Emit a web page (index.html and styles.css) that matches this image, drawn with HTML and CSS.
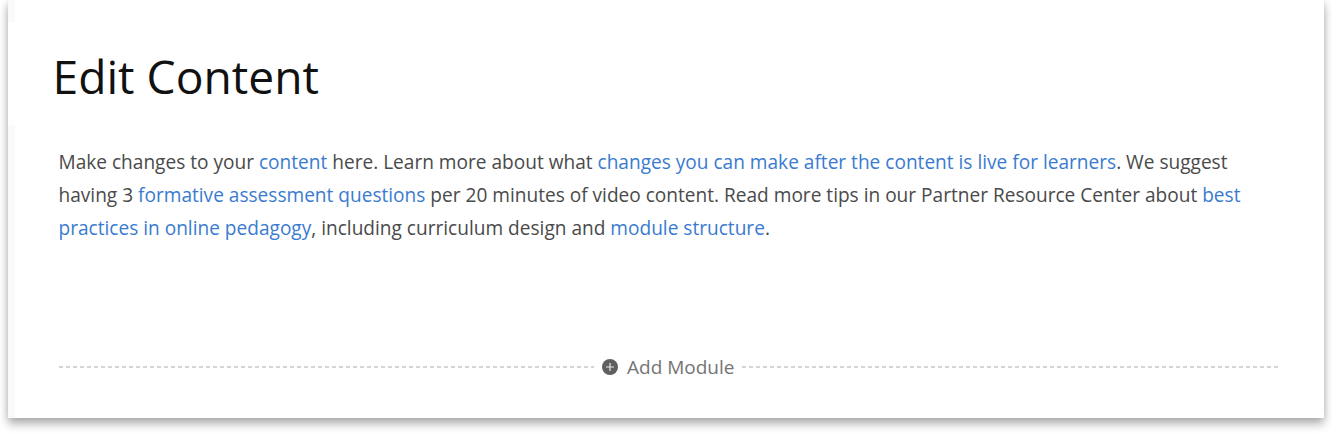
FILE: index.html
```html
<!DOCTYPE html>
<html lang="en">
<head>
    <meta charset="UTF-8">
    <meta name="viewport" content="width=device-width, initial-scale=1.0">
    <link rel="stylesheet" href="styles.css">
    <title>Edit Content</title>
</head>
<body>
    <div class="card">
        <h1 class="title">Edit Content</h1>
        <p class="intro">
            Make changes to your <a href="#">content</a> here. Learn more about what <a href="#">changes you can make after the content is live for learners</a>. We suggest having 3 <a href="#">formative assessment questions</a> per 20 minutes of video content. Read more tips in our Partner Resource Center about <a href="#">best practices in online pedagogy</a>, including curriculum design and <a href="#">module structure</a>.
        </p>
        <div class="add-row">
            <span class="dash"></span>
            <button class="add-btn" type="button">
                <svg class="add-icon" width="16" height="16" viewBox="0 0 16 16">
                    <circle cx="8" cy="8" r="8" fill="#5f5f5f"/>
                    <path d="M8 4v8M4 8h8" stroke="#e8e8e8" stroke-width="1.2"/>
                </svg>
                Add Module
            </button>
            <span class="dash"></span>
        </div>
    </div>
</body>
</html>
```

FILE: styles.css
```css
*{
    box-sizing: border-box;
}

html, body{
    height: 100%;
}

body{
    margin: 0;
    background-color: white;
    font-family: "Open Sans", sans-serif;
    overflow: hidden;
}

.card{
    width: 1316px;
    height: 418px;
    margin-left: 8px;
    padding: 47px 46px 0 50.5px;
    background-color: white;
    background-image: linear-gradient(#fafafa, #fafafa), linear-gradient(#fafafa, #fafafa);
    background-repeat: no-repeat;
    background-size: 7px 22px, 7px 293px;
    background-position: left top, left bottom;
    box-shadow: 0 6px 9px rgba(0, 0, 0, 0.3), 0 0 7px rgba(0, 0, 0, 0.1);
}

.title{
    margin: 0 0 0 -6px;
    font-size: 46.2px;
    line-height: 60px;
    font-weight: 400;
    color: #111;
}

.intro{
    margin: 39px 0 0 0;
    font-size: 19.08px;
    line-height: 33px;
    color: #4a4a4a;
}

.intro a{
    color: #3a7bd0;
    text-decoration: none;
}

.add-row{
    display: flex;
    align-items: center;
    gap: 8px;
    margin-top: 109px;
}

.dash{
    flex: 1;
    height: 2px;
    background-image: repeating-linear-gradient(to right, #d4d4d4 0, #d4d4d4 4px, transparent 4px, transparent 7px);
}

.add-btn{
    display: flex;
    align-items: center;
    gap: 9px;
    padding: 0;
    border: none;
    background: none;
    font-family: inherit;
    font-size: 19px;
    line-height: 26px;
    color: #747474;
}
```
